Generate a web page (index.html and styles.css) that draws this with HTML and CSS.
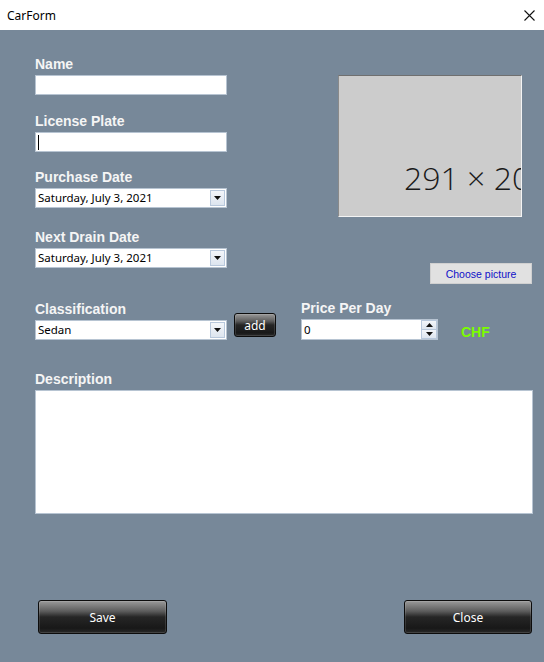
FILE: index.html
```html
<!DOCTYPE html>
<html>
<head>
<meta charset="utf-8">
<title>CarForm</title>
<link rel="stylesheet" href="styles.css">
</head>
<body>
<div class="window">
  <div class="titlebar">
    <span class="title">CarForm</span>
    <svg class="close-x" width="11" height="11" viewBox="0 0 11 11"><path d="M0.5 0.5 L10.5 10.5 M10.5 0.5 L0.5 10.5" stroke="#111" stroke-width="1.1" fill="none"/></svg>
  </div>
  <div class="form">
    <div class="top">
      <div class="left-col">
        <div class="group g-name">
          <div class="label">Name</div>
          <div class="box"></div>
        </div>
        <div class="group g-plate">
          <div class="label">License Plate</div>
          <div class="box"><span class="caret"></span></div>
        </div>
        <div class="group g-purchase">
          <div class="label">Purchase Date</div>
          <div class="box combo"><span class="val">Saturday, July 3, 2021</span><span class="drop"><svg width="7" height="4" viewBox="0 0 7 4"><path d="M0 0 H7 L3.5 4 Z" fill="#111"/></svg></span></div>
        </div>
        <div class="group g-drain">
          <div class="label">Next Drain Date</div>
          <div class="box combo"><span class="val">Saturday, July 3, 2021</span><span class="drop"><svg width="7" height="4" viewBox="0 0 7 4"><path d="M0 0 H7 L3.5 4 Z" fill="#111"/></svg></span></div>
        </div>
      </div>
      <div class="right-col">
        <div class="picture"><span class="ph">291 × 200</span></div>
        <div class="choose">Choose picture</div>
      </div>
    </div>
    <div class="mid">
      <div class="group g-class">
        <div class="label">Classification</div>
        <div class="box combo"><span class="val">Sedan</span><span class="drop"><svg width="7" height="4" viewBox="0 0 7 4"><path d="M0 0 H7 L3.5 4 Z" fill="#111"/></svg></span></div>
      </div>
      <div class="dark-btn add">add</div>
      <div class="group g-price">
        <div class="label">Price Per Day</div>
        <div class="box spin"><span class="val">0</span>
          <span class="spin-btns">
            <span class="sb"><svg width="7" height="4" viewBox="0 0 7 4"><path d="M0 4 H7 L3.5 0 Z" fill="#111"/></svg></span>
            <span class="sb"><svg width="7" height="4" viewBox="0 0 7 4"><path d="M0 0 H7 L3.5 4 Z" fill="#111"/></svg></span>
          </span>
        </div>
      </div>
      <div class="chf">CHF</div>
    </div>
    <div class="group g-desc">
      <div class="label">Description</div>
      <div class="box textarea"></div>
    </div>
    <div class="actions">
      <div class="dark-btn big">Save</div>
      <div class="dark-btn big">Close</div>
    </div>
  </div>
</div>
</body>
</html>
```
FILE: styles.css
```css
* { box-sizing: border-box; }
html, body { margin: 0; padding: 0; }
body { width: 544px; height: 662px; overflow: hidden; font-family: "Liberation Sans", Arial, sans-serif; }
.window { width: 544px; height: 662px; display: flex; flex-direction: column; }
.titlebar {
  height: 30px; background: #fff; display: flex; align-items: center;
  justify-content: space-between; padding: 0 9px 0 7px;
}
.title { font-family: "Noto Sans", "Open Sans", sans-serif; font-size: 12px; color: #000; }
.close-x { margin-top: 1px; }
.form {
  flex: 1; background: #778899; padding: 26px 12px 0 35px;
  display: flex; flex-direction: column;
}
.top { display: grid; grid-template-columns: 192px 194px; column-gap: 111px; }
.label {
  font-family: "Liberation Sans", Arial, sans-serif; font-weight: bold;
  font-size: 14px; line-height: 16px; color: #f5f5f5; margin-bottom: 3px;
  white-space: nowrap;
}
.box {
  height: 20px; background: #fff; border: 1px solid #b7c4d2;
  position: relative; display: flex; align-items: center;
}
.g-plate { margin-top: 18px; }
.g-purchase { margin-top: 17px; }
.g-drain { margin-top: 21px; }
.caret { width: 1px; height: 15px; background: #000; margin-left: 2px; }
.val {
  font-family: "Noto Sans", "Open Sans", sans-serif; font-size: 11.5px; color: #000;
  padding-left: 2px; white-space: nowrap; flex: 1; line-height: 14px;
}
.drop {
  width: 15px; height: 16px; margin-right: 1px; border: 1px solid #b8c8dc;
  background: linear-gradient(#f3f6fa, #dde5ef);
  display: flex; align-items: center; justify-content: center;
}
.right-col { display: flex; flex-direction: column; align-items: flex-start; }
.picture {
  margin-top: 19px; width: 184px; height: 142px; background: #cccccc;
  border-top: 1px solid #6f6f6f; border-left: 1px solid #8a8a8a;
  border-right: 1px solid #f4f4f4; border-bottom: 1px solid #f4f4f4;
  overflow: hidden; white-space: nowrap;
}
.ph {
  display: block; padding-left: 65px; padding-top: 84px;
  font-family: "Open Sans", "Noto Sans", sans-serif; font-weight: 300;
  font-size: 32px; line-height: 36px; color: #1a1a1a;
}
.choose {
  align-self: flex-end; margin-top: 46px; width: 102px; height: 21px;
  background: #e1e1e1; border: 1px solid #d0d0d0;
  font-family: "Liberation Sans", Arial, sans-serif; font-size: 10.5px; color: #1010c8;
  display: flex; align-items: center; justify-content: center;
}
.mid { display: flex; align-items: flex-start; margin-top: 16px; }
.g-class { width: 192px; margin-top: 1px; }
.dark-btn {
  border: 1px solid #0c0c0c; border-radius: 3px; color: #fff;
  background: linear-gradient(#9a9a9a 0%, #5c5c5c 32%, #262626 50%, #181818 85%, #2a2a2a 100%);
  display: flex; align-items: center; justify-content: center;
  font-family: "Noto Sans", "Open Sans", sans-serif; font-size: 12px;
  box-shadow: inset 0 0 0 1px rgba(255,255,255,0.12);
}
.add { width: 42px; height: 24px; margin-left: 7px; margin-top: 13px; font-size: 12px; }
.g-price { width: 137px; margin-left: 25px; }
.spin { height: 21px; }
.spin-btns {
  display: flex; flex-direction: column; width: 16px; height: 19px; margin-right: 0px;
}
.sb {
  flex: 1; border: 1px solid #b8c8dc; background: linear-gradient(#f3f6fa, #dde5ef);
  display: flex; align-items: center; justify-content: center;
}
.sb + .sb { border-top: none; }
.chf {
  margin-left: 23px; margin-top: 24px; font-weight: bold; font-size: 14px;
  line-height: 16px; color: #7cfc00;
}
.g-desc { margin-top: 31px; }
.textarea { height: 124px; width: 498px; }
.actions {
  margin-top: 86px; padding-left: 3px; display: flex; justify-content: space-between;
}
.big { width: 129px; height: 34px; }
.actions .big:last-child { width: 128px; }
```
